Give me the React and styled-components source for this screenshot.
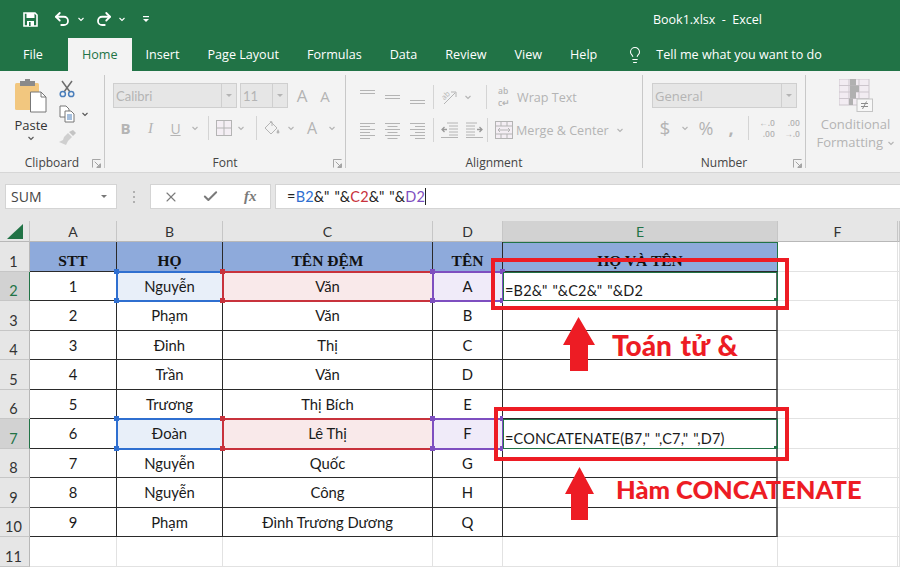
import React from 'react'
import styled, { createGlobalStyle } from 'styled-components'
import { Undo2, Redo2, Lightbulb, X, Check } from 'lucide-react'

const GREEN = '#217346'
const MUTED = '#b4b4b4'
const UI_FONT = '"Open Sans", "Noto Sans", sans-serif'
const CELL_FONT = 'Lato, "Noto Sans", sans-serif'

const Global = createGlobalStyle`
  html, body { margin: 0; padding: 0; }
  body { width: 900px; height: 567px; overflow: hidden; background: #fff; font-family: ${UI_FONT}; }
`

const Root = styled.div`
  width: 900px;
  height: 567px;
  overflow: hidden;
  display: flex;
  flex-direction: column;
`

/* title bar */
const TitleBar = styled.div`
  height: 38px;
  background: ${GREEN};
  color: #fff;
  display: flex;
  align-items: center;
  padding: 0 0 0 23px;
  box-sizing: border-box;
  flex: none;
`
const QuickSlot = styled.span`
  width: ${p => p.$w}px;
  margin-left: ${p => p.$ml || 0}px;
  display: flex;
  align-items: center;
  justify-content: center;
  flex: none;
`
const TitleText = styled.span`
  margin-left: 503px;
  font-size: 12.5px;
  white-space: pre;
`

/* tabs */
const TabRow = styled.div`
  height: 33px;
  background: ${GREEN};
  display: flex;
  padding-left: 9px;
  flex: none;
`
const Tab = styled.div`
  padding: 0 14px;
  margin-left: ${p => p.$ml || 0}px;
  font-size: 12.6px;
  line-height: 33px;
  color: ${p => (p.$active ? GREEN : '#fff')};
  background: ${p => (p.$active ? '#f3f3f3' : 'transparent')};
  white-space: nowrap;
`
const TellMe = styled.div`
  display: flex;
  align-items: center;
  gap: 12px;
  margin-left: 15px;
  color: #fff;
  font-size: 12.6px;
`

/* ribbon */
const Ribbon = styled.div`
  height: 102px;
  background: #f3f3f3;
  border-bottom: 1px solid #d6d6d6;
  box-sizing: border-box;
  display: flex;
  flex: none;
`
const Group = styled.div`
  width: ${p => p.$w}px;
  flex: none;
  display: flex;
  flex-direction: column;
  position: relative;
  margin: 4px 0 4px;
  border-right: ${p => (p.$last ? 'none' : '1px solid #c8c8c8')};
  box-sizing: border-box;
`
const GroupBody = styled.div`
  flex: 1;
  display: flex;
  min-height: 0;
  padding-left: ${p => p.$pl || 0}px;
`
const GroupLabel = styled.div`
  height: 18px;
  line-height: 18px;
  margin-bottom: -4px;
  text-align: center;
  font-size: 12px;
  color: #444;
  flex: none;
`
const Launcher = styled.svg`
  position: absolute;
  right: 3px;
  bottom: 0;
  width: 9px;
  height: 9px;
`
const Stack = styled.div`
  display: flex;
  flex-direction: column;
  gap: ${p => p.$gap || 0}px;
  padding-top: ${p => p.$pt || 0}px;
`
const ToolRow = styled.div`
  height: ${p => p.$h || 24}px;
  display: flex;
  align-items: center;
`
const Slot = styled.span`
  width: ${p => p.$w}px;
  height: 100%;
  display: flex;
  align-items: center;
  justify-content: center;
  flex: none;
  color: ${MUTED};
  font-family: ${p => (p.$serif ? '"Liberation Serif", serif' : UI_FONT)};
  font-size: ${p => p.$size || 14}px;
  font-weight: ${p => (p.$bold ? 700 : 400)};
  font-style: ${p => (p.$italic ? 'italic' : 'normal')};
  text-decoration: ${p => (p.$under ? 'underline' : 'none')};
`
const Divider = styled.span`
  width: 1px;
  height: 24px;
  background: #d4d4d4;
  margin: 0 ${p => p.$mx || 0}px;
  flex: none;
`
const SelectBox = styled.div`
  width: ${p => p.$w}px;
  height: 25px;
  background: #e6e6e6;
  border: 1px solid #cfcfcf;
  box-sizing: border-box;
  display: flex;
  align-items: center;
  color: ${MUTED};
  font-family: ${p => (p.$calibri ? CELL_FONT : UI_FONT)};
  font-size: 13px;
  padding-left: 2px;
  margin-right: ${p => p.$mr || 0}px;
  flex: none;
`
const SelectText = styled.span`
  flex: 1;
`
const SelectArrow = styled.span`
  width: 14px;
  height: 100%;
  border-left: 1px solid #cfcfcf;
  display: flex;
  align-items: center;
  justify-content: center;
`
const Triangle = styled.span`
  width: 0;
  height: 0;
  border-left: 3px solid transparent;
  border-right: 3px solid transparent;
  border-top: 3px solid ${p => p.$color || MUTED};
`
const MutedLabel = styled.span`
  color: ${MUTED};
  font-size: 12.6px;
  margin-left: 3px;
  white-space: nowrap;
`
const PasteColumn = styled.div`
  width: 48px;
  margin-left: 7px;
  padding-top: 4px;
  display: flex;
  flex-direction: column;
  align-items: center;
  flex: none;
`
const PasteLabel = styled.span`
  font-size: 13px;
  color: #333;
  line-height: 17px;
  margin-top: 4px;
`
const ClipTools = styled.div`
  display: flex;
  flex-direction: column;
  align-items: flex-start;
  padding: 5px 0 0 4px;
  gap: 7px;
`
const CondColumn = styled.div`
  flex: 1;
  display: flex;
  flex-direction: column;
  align-items: center;
  padding: 4px 0 0 5px;
`
const CondLabel = styled.div`
  margin-top: 3px;
  text-align: center;
  color: ${MUTED};
  font-size: 13px;
  line-height: 18px;
  white-space: nowrap;
`

/* formula bar */
const FormulaRow = styled.div`
  height: 48px;
  background: #e6e6e6;
  display: flex;
  align-items: flex-start;
  padding: 11px 0 0 5px;
  box-sizing: border-box;
  flex: none;
`
const NameBox = styled.div`
  width: 112px;
  height: 25px;
  background: #fff;
  border: 1px solid #d4d4d4;
  box-sizing: border-box;
  display: flex;
  align-items: center;
  justify-content: space-between;
  padding: 0 9px 0 5px;
  font-size: 14px;
  color: #444;
`
const Grip = styled.span`
  width: 33px;
  height: 25px;
  display: flex;
  align-items: center;
  justify-content: center;
`
const GripDots = styled.span`
  width: 2px;
  height: 12px;
  background: repeating-linear-gradient(to bottom, #b0b0b0 0 2px, transparent 2px 5px);
`
const FxBox = styled.div`
  width: 121px;
  height: 25px;
  background: #fff;
  border: 1px solid #d4d4d4;
  box-sizing: border-box;
  display: flex;
  align-items: center;
  color: #7a7a7a;
  margin-right: 4px;
`
const FxSlot = styled.span`
  width: 40px;
  display: flex;
  justify-content: center;
  font-family: "Liberation Serif", serif;
  font-style: italic;
  font-weight: 700;
  font-size: 15px;
`
const FormulaInput = styled.div`
  flex: 1;
  height: 25px;
  background: #fff;
  border: 1px solid #d4d4d4;
  border-right: none;
  box-sizing: border-box;
  font-family: ${CELL_FONT};
  font-size: 14.5px;
  word-spacing: 1px;
  letter-spacing: 0.2px;
  line-height: 24px;
  padding-left: 11px;
  color: #222;
  white-space: pre;
`
const Ref = styled.span`
  color: ${p => p.$color};
`
const Caret = styled.span`
  display: inline-block;
  width: 1px;
  height: 17px;
  background: #222;
  vertical-align: -3px;
`

/* sheet */
const Sheet = styled.div`
  position: relative;
  flex: 1;
  display: grid;
  grid-template-columns: 30px 87px 106px 210px 70px 275px 120px 2px;
  grid-template-rows: 21px repeat(11, 29.5px);
  background: #fff;
  overflow: hidden;
`
const ColHead = styled.div`
  background: ${p => (p.$sel ? '#d2d2d2' : '#e6e6e6')};
  border-right: 1px solid #c6c6c6;
  border-bottom: 1px solid #b8b8b8;
  box-sizing: border-box;
  display: flex;
  align-items: center;
  justify-content: center;
  font-family: ${CELL_FONT};
  font-size: 14px;
  color: ${p => (p.$sel ? GREEN : '#333')};
`
const CornerMark = styled.svg`
  width: 16px;
  height: 15px;
`
const RowHead = styled.div`
  background: ${p => (p.$sel ? '#d2d2d2' : '#e6e6e6')};
  border-bottom: 1px solid #c6c6c6;
  border-right: ${p => (p.$sel ? `1px solid ${GREEN}` : '1px solid #b8b8b8')};
  box-sizing: border-box;
  display: flex;
  align-items: flex-end;
  justify-content: center;
  font-family: ${CELL_FONT};
  font-size: 14.5px;
  line-height: 18px;
  padding-right: 2px;
  color: ${p => (p.$sel ? GREEN : '#333')};
`
const Cell = styled.div`
  position: relative;
  box-sizing: border-box;
  display: flex;
  align-items: center;
  justify-content: center;
  white-space: nowrap;
  font-family: ${CELL_FONT};
  font-size: 14.8px;
  color: #1a1a1a;
  background: ${p => p.$bg || '#fff'};
  border-right: ${p => (p.$open ? '1px solid #e2e2e2' : '1px solid #2a2a2a')};
  border-bottom: ${p => (p.$open ? '1px solid #e2e2e2' : '1px solid #2a2a2a')};
`
const HeaderCell = styled(Cell)`
  background: #8eaadb;
  font-family: "Liberation Serif", serif;
  font-weight: 700;
  font-size: 15.5px;
  align-items: flex-end;
  padding-bottom: 1px;
  color: #111;
  border-top: ${p => (p.$sel ? `1px solid ${GREEN}` : 'none')};
  border-right: ${p => (p.$sel ? `1px solid ${GREEN}` : '1px solid #2a2a2a')};
`
const RangeCell = styled(Cell)`
  background: ${p => p.$tint};
  outline: 2px solid ${p => p.$color};
  outline-offset: -1px;
  z-index: 1;
`
const Handle = styled.i`
  position: absolute;
  width: 5px;
  height: 5px;
  background: ${p => p.$color};
  left: ${p => (p.$h === 'l' ? '-3px' : 'auto')};
  right: ${p => (p.$h === 'r' ? '-3px' : 'auto')};
  top: ${p => (p.$v === 't' ? '-3px' : 'auto')};
  bottom: ${p => (p.$v === 'b' ? '-3px' : 'auto')};
`
const FormulaCell = styled(Cell)`
  justify-content: flex-start;
  align-items: flex-end;
  padding: 0 0 1px 2px;
  font-size: 14.5px;
  word-spacing: 1px;
  letter-spacing: 0.2px;
  line-height: 16px;
  border-right: 2px solid #666;
  outline: ${p => (p.$editing ? `1px solid ${GREEN}` : 'none')};
  outline-offset: -1px;
  z-index: 2;
`
const GreenDot = styled.i`
  position: absolute;
  right: -2px;
  bottom: -2px;
  width: 4px;
  height: 4px;
  background: ${GREEN};
`

/* annotations drawn over the sheet */
const RedBox = styled.div`
  position: absolute;
  left: ${p => p.$x}px;
  top: ${p => p.$y}px;
  width: ${p => p.$w}px;
  height: ${p => p.$h}px;
  border: 4px solid #ed1c24;
  box-sizing: border-box;
  z-index: 5;
`
const Arrow = styled.svg`
  position: absolute;
  left: ${p => p.$x}px;
  top: ${p => p.$y}px;
  z-index: 5;
`
const Callout = styled.div`
  position: absolute;
  left: ${p => p.$x}px;
  top: ${p => p.$y}px;
  font-family: ${CELL_FONT};
  font-weight: 900;
  font-size: ${p => p.$size}px;
  word-spacing: ${p => p.$ws || 0}px;
  line-height: 30px;
  color: #ed1c24;
  white-space: nowrap;
  z-index: 5;
`

/* small drawings */
const Chev = ({ color = MUTED, size = 8 }) => (
  <svg width={size} height={size} viewBox="0 0 8 8">
    <path d="M1.5 3 4 5.5 6.5 3" fill="none" stroke={color} strokeWidth="1.1" />
  </svg>
)
const SaveIcon = () => (
  <svg width="15" height="15" viewBox="0 0 15 15">
    <path d="M1 1h11l2 2v11H1z" fill="none" stroke="#fff" strokeWidth="1.6" />
    <rect x="3.5" y="1" width="8" height="5" fill="#fff" />
    <path d="M4 9h7v5H4z" fill="#fff" />
    <rect x="6" y="10" width="1.6" height="4" fill={GREEN} />
  </svg>
)
const CustomizeIcon = () => (
  <svg width="8" height="8" viewBox="0 0 8 8">
    <rect x="1" y="1" width="6" height="1.2" fill="#fff" />
    <path d="M1 4h6L4 7z" fill="#fff" />
  </svg>
)
const PasteIcon = () => (
  <svg width="32" height="34" viewBox="0 0 32 34">
    <rect x="0" y="4" width="24" height="27" rx="1.5" fill="#f2c77f" />
    <rect x="5" y="2" width="15" height="5" fill="#8a8a8a" />
    <rect x="10" y="0" width="5" height="3" fill="#8a8a8a" />
    <path d="M15.5 13H26l5 5v15H15.5z" fill="#fff" stroke="#777" />
    <path d="M26 13v5h5" fill="none" stroke="#777" />
  </svg>
)
const ScissorsIcon = () => (
  <svg width="16" height="18" viewBox="0 0 16 18">
    <path d="M3 1l8 11M13 1 5 12" stroke="#6d6d6d" strokeWidth="1.5" fill="none" />
    <circle cx="3.8" cy="14" r="2.6" fill="none" stroke="#4a7ebb" strokeWidth="1.5" />
    <circle cx="12.2" cy="14" r="2.6" fill="none" stroke="#4a7ebb" strokeWidth="1.5" />
  </svg>
)
const CopyIcon = () => (
  <svg width="16" height="18" viewBox="0 0 16 18">
    <path d="M1 1h6l3 3v8H1z" fill="#fff" stroke="#777" />
    <path d="M6 6h6l3 3v8H6z" fill="#fff" stroke="#777" />
    <path d="M8 10h5M8 12h5M8 14h5" stroke="#4a7ebb" />
  </svg>
)
const BrushIcon = () => (
  <svg width="17" height="15" viewBox="0 0 17 15">
    <path d="M10 2l4-2 3 3-3 3z" fill="#c4c4c4" />
    <path d="M9 3l4 4-4 4-2 4-7-3 4-2 1-3z" fill="#cfcfcf" />
  </svg>
)
const BordersIcon = () => (
  <svg width="16" height="16" viewBox="0 0 16 16">
    <rect x="0.5" y="0.5" width="15" height="15" fill="#f4eef4" stroke={MUTED} />
    <path d="M8 0v16M0 8h16" stroke={MUTED} />
  </svg>
)
const FillIcon = () => (
  <svg width="16" height="15" viewBox="0 0 16 15">
    <path d="M7 1 13 7 7 13 1 7z" fill="none" stroke={MUTED} />
    <path d="M6 1c0-1 2-1 2 0v4" fill="none" stroke={MUTED} />
    <path d="M14 8l1.5 3a1.5 1.5 0 1 1-3 0z" fill={MUTED} />
  </svg>
)
const Lines = ({ rows, align = 'left', gray = MUTED }) => (
  <svg width="15" height="17" viewBox="0 0 15 17">
    {rows.map(([y, w], i) => {
      const x = align === 'left' ? 0 : align === 'right' ? 15 - w : (15 - w) / 2
      return <rect key={i} x={x} y={y} width={w} height="1" fill={gray} />
    })}
  </svg>
)
const alignRows = [[1, 15], [4, 10], [7, 15], [10, 10], [13, 15], [16, 10]]
const OrientIcon = () => (
  <svg width="20" height="20" viewBox="0 0 20 20">
    <text x="8" y="11" textAnchor="middle" fontFamily="Open Sans" fontSize="7.5" fill={MUTED} transform="rotate(-45 8 9)">ab</text>
    <path d="M6 17 17 6M13 5h5v5" stroke={MUTED} fill="none" />
  </svg>
)
const IndentIcon = ({ flip }) => (
  <svg width="17" height="16" viewBox="0 0 17 16" transform={flip ? 'scale(-1 1)' : undefined}>
    <path d="M6 1h11M8 4h9M8 7h9M8 10h9M8 13h9M0 15.5h17" stroke={MUTED} />
    <path d="M6 7.5H1M3.5 5 1 7.5 3.5 10" fill="none" stroke="#9a9a9a" strokeWidth="1.3" />
  </svg>
)
const MergeIcon = () => (
  <svg width="18" height="18" viewBox="0 0 18 18">
    <rect x="0.5" y="0.5" width="17" height="17" fill="#f4eef4" stroke={MUTED} />
    <path d="M0 5h18M0 13h18M6 0v5M12 0v5M6 13v5M12 13v5" stroke={MUTED} />
    <path d="M3 9h12M5 7 3 9l2 2M13 7l2 2-2 2" stroke={MUTED} fill="none" />
  </svg>
)
const WrapGlyph = styled.span`
  color: ${MUTED};
  font-size: 8.5px;
  line-height: 11.6px;
  font-weight: 600;
  width: 14px;
`
const DecimalGlyph = styled.span`
  color: ${MUTED};
  font-size: 8.5px;
  line-height: 11px;
  text-align: right;
  font-weight: 600;
  white-space: pre;
`
const CondIcon = () => (
  <svg width="34" height="33" viewBox="0 0 34 33">
    <rect x="0" y="0" width="30" height="26" fill="#f2ecf2" stroke="#cdc6cd" />
    <path d="M10 0v26M20 0v26M0 6.5h30M0 13h30M0 19.5h30" stroke="#cdc6cd" />
    <rect x="11" y="0" width="6" height="6.5" fill="#b0b0b0" />
    <rect x="11" y="6.5" width="9" height="6.5" fill="#b0b0b0" />
    <rect x="11" y="13" width="6" height="6.5" fill="#b0b0b0" />
    <rect x="10" y="19.5" width="4" height="6.5" fill="#b0b0b0" />
    <rect x="18" y="20" width="15.5" height="12.5" fill="#f7f7f7" stroke="#c4c4c4" />
    <path d="M22 24.5h7M22 27.5h7M27.5 22.5l-4 7.5" stroke="#8c8c8c" />
  </svg>
)
const LaunchMark = () => (
  <Launcher viewBox="0 0 10 10">
    <path d="M0.5 9.5V0.5h9M9.5 5v4.5H5M3 3l5.5 5.5M8.5 5.5v3h-3" fill="none" stroke="#999" />
  </Launcher>
)

const COLS = ['A', 'B', 'C', 'D', 'E', 'F']
const ROWS = [
  ['1', 'Nguyễn', 'Văn', 'A'],
  ['2', 'Phạm', 'Văn', 'B'],
  ['3', 'Đinh', 'Thị', 'C'],
  ['4', 'Trần', 'Văn', 'D'],
  ['5', 'Trương', 'Thị Bích', 'E'],
  ['6', 'Đoàn', 'Lê Thị', 'F'],
  ['7', 'Nguyễn', 'Quốc', 'G'],
  ['8', 'Nguyễn', 'Công', 'H'],
  ['9', 'Phạm', 'Đình Trương Dương', 'Q'],
]
const HEADERS = ['STT', 'HỌ', 'TÊN ĐỆM', 'TÊN']
const RANGES = [
  { color: '#2f6fd0', tint: '#e8eff9' },
  { color: '#c8323c', tint: '#f9e9ea' },
  { color: '#7e4fc0', tint: '#f0ebf9' },
]
const FORMULAS = {
  2: '=B2&" "&C2&" "&D2',
  7: '=CONCATENATE(B7," ",C7," ",D7)',
}

const Corners = ({ color }) => (
  <>
    <Handle $color={color} $h="l" $v="t" />
    <Handle $color={color} $h="r" $v="t" />
    <Handle $color={color} $h="l" $v="b" />
    <Handle $color={color} $h="r" $v="b" />
  </>
)

const renderRow = (row, i) => {
  const num = i + 2
  const active = Boolean(FORMULAS[num])
  return (
    <React.Fragment key={num}>
      <RowHead $sel={active}>{num}</RowHead>
      <Cell>{row[0]}</Cell>
      {[1, 2, 3].map(c =>
        active ? (
          <RangeCell key={c} $color={RANGES[c - 1].color} $tint={RANGES[c - 1].tint}>
            {row[c]}
            <Corners color={RANGES[c - 1].color} />
          </RangeCell>
        ) : (
          <Cell key={c}>{row[c]}</Cell>
        )
      )}
      <FormulaCell $editing={active}>
        {FORMULAS[num]}
        {active && <GreenDot />}
      </FormulaCell>
      <Cell $open />
      <Cell $open />
    </React.Fragment>
  )
}

export default function App() {
  return (
    <Root>
      <Global />
      <TitleBar>
        <QuickSlot $w={15}><SaveIcon /></QuickSlot>
        <QuickSlot $w={18} $ml={15}><Undo2 size={18} strokeWidth={2.4} /></QuickSlot>
        <QuickSlot $w={14} $ml={3}><Chev color="#fff" /></QuickSlot>
        <QuickSlot $w={18} $ml={7}><Redo2 size={18} strokeWidth={2.4} /></QuickSlot>
        <QuickSlot $w={14} $ml={2}><Chev color="#fff" /></QuickSlot>
        <QuickSlot $w={8} $ml={13}><CustomizeIcon /></QuickSlot>
        <TitleText>Book1.xlsx  -  Excel</TitleText>
      </TitleBar>

      <TabRow>
        <Tab>File</Tab>
        <Tab $active $ml={11}>Home</Tab>
        <Tab>Insert</Tab>
        <Tab>Page Layout</Tab>
        <Tab>Formulas</Tab>
        <Tab>Data</Tab>
        <Tab>Review</Tab>
        <Tab>View</Tab>
        <Tab>Help</Tab>
        <TellMe>
          <Lightbulb size={18} strokeWidth={1.4} />
          Tell me what you want to do
        </TellMe>
      </TabRow>

      <Ribbon>
        <Group $w={105}>
          <GroupBody>
            <PasteColumn>
              <PasteIcon />
              <PasteLabel>Paste</PasteLabel>
              <Chev color="#555" />
            </PasteColumn>
            <ClipTools>
              <ScissorsIcon />
              <ToolRow $h={18}>
                <CopyIcon />
                <Slot $w={20}><Chev color="#555" /></Slot>
              </ToolRow>
              <BrushIcon />
            </ClipTools>
          </GroupBody>
          <GroupLabel>Clipboard</GroupLabel>
          <LaunchMark />
        </Group>

        <Group $w={241}>
          <GroupBody $pl={8}>
            <Stack $pt={8} $gap={8}>
              <ToolRow $h={25}>
                <SelectBox $w={124} $mr={3} $calibri>
                  <SelectText>Calibri</SelectText>
                  <SelectArrow><Triangle /></SelectArrow>
                </SelectBox>
                <SelectBox $w={48} $calibri>
                  <SelectText>11</SelectText>
                  <SelectArrow><Triangle /></SelectArrow>
                </SelectBox>
                <Slot $w={24} $size={17} style={{ marginLeft: 2 }}>A</Slot>
                <Slot $w={22} $size={15}>A</Slot>
              </ToolRow>
              <ToolRow $h={24}>
                <Slot $w={25} $size={15} $bold>B</Slot>
                <Slot $w={25} $size={15} $italic $serif>I</Slot>
                <Slot $w={25} $size={14} $under>U</Slot>
                <Slot $w={14}><Chev /></Slot>
                <Divider $mx={6} />
                <Slot $w={17}><BordersIcon /></Slot>
                <Slot $w={18}><Chev /></Slot>
                <Divider $mx={6} />
                <Slot $w={18}><FillIcon /></Slot>
                <Slot $w={20}><Chev /></Slot>
                <Slot $w={22} $size={16}>A</Slot>
                <Slot $w={18}><Chev /></Slot>
              </ToolRow>
            </Stack>
          </GroupBody>
          <GroupLabel>Font</GroupLabel>
          <LaunchMark />
        </Group>

        <Group $w={297}>
          <GroupBody $pl={9}>
            <Stack $pt={10} $gap={9}>
              <ToolRow>
                <Slot $w={25}><Lines rows={[[1, 15], [4, 15]]} /></Slot>
                <Slot $w={25}><Lines rows={[[6, 15], [9, 15]]} /></Slot>
                <Slot $w={25}><Lines rows={[[11, 15], [14, 15]]} /></Slot>
                <Divider $mx={3} />
                <Slot $w={22}><OrientIcon /></Slot>
                <Slot $w={18}><Chev /></Slot>
                <Slot $w={9} />
                <Divider />
                <Slot $w={9} />
                <Slot $w={18}>
                  <WrapGlyph>ab<br />c↵</WrapGlyph>
                </Slot>
                <MutedLabel>Wrap Text</MutedLabel>
              </ToolRow>
              <ToolRow>
                <Slot $w={25}><Lines rows={alignRows} /></Slot>
                <Slot $w={25}><Lines rows={alignRows} align="center" /></Slot>
                <Slot $w={25}><Lines rows={alignRows} align="right" /></Slot>
                <Divider $mx={3} />
                <Slot $w={25}><IndentIcon /></Slot>
                <Slot $w={25}><IndentIcon flip /></Slot>
                <Divider />
                <Slot $w={7} />
                <Slot $w={18}><MergeIcon /></Slot>
                <MutedLabel>Merge &amp; Center</MutedLabel>
                <Slot $w={22}><Chev /></Slot>
              </ToolRow>
            </Stack>
          </GroupBody>
          <GroupLabel>Alignment</GroupLabel>
        </Group>

        <Group $w={163}>
          <GroupBody $pl={9}>
            <Stack $pt={8} $gap={8}>
              <ToolRow $h={25}>
                <SelectBox $w={145}>
                  <SelectText>General</SelectText>
                  <SelectArrow><Triangle /></SelectArrow>
                </SelectBox>
              </ToolRow>
              <ToolRow $h={24}>
                <Slot $w={26} $size={19}>$</Slot>
                <Slot $w={14}><Chev /></Slot>
                <Slot $w={28} $size={18}>%</Slot>
                <Slot $w={22} $size={18} $bold>,</Slot>
                <Divider $mx={6} />
                <Slot $w={24}><DecimalGlyph>←.0<br />.00</DecimalGlyph></Slot>
                <Slot $w={26}><DecimalGlyph>.00<br />→.0</DecimalGlyph></Slot>
              </ToolRow>
            </Stack>
          </GroupBody>
          <GroupLabel>Number</GroupLabel>
          <LaunchMark />
        </Group>

        <Group $w={94} $last>
          <GroupBody>
            <CondColumn>
              <CondIcon />
              <CondLabel>Conditional<br />Formatting <Chev /></CondLabel>
            </CondColumn>
          </GroupBody>
        </Group>
      </Ribbon>

      <FormulaRow>
        <NameBox>SUM<Triangle $color="#777" /></NameBox>
        <Grip><GripDots /></Grip>
        <FxBox>
          <FxSlot><X size={16} strokeWidth={1.6} /></FxSlot>
          <FxSlot><Check size={17} strokeWidth={2.8} /></FxSlot>
          <FxSlot>fx</FxSlot>
        </FxBox>
        <FormulaInput>
          =<Ref $color="#2f6fd0">B2</Ref>&amp;" "&amp;<Ref $color="#c8323c">C2</Ref>&amp;" "&amp;<Ref $color="#7e4fc0">D2</Ref><Caret />
        </FormulaInput>
      </FormulaRow>

      <Sheet>
        <ColHead>
          <CornerMark viewBox="0 0 16 15"><path d="M16 0v15H0z" fill={GREEN} /></CornerMark>
        </ColHead>
        {COLS.map(c => <ColHead key={c} $sel={c === 'E'}>{c}</ColHead>)}
        <ColHead />

        <RowHead>1</RowHead>
        {HEADERS.map(h => <HeaderCell key={h}>{h}</HeaderCell>)}
        <HeaderCell $sel>HỌ VÀ TÊN</HeaderCell>
        <Cell $open />
        <Cell $open />

        {ROWS.map(renderRow)}

        <RowHead>11</RowHead>
        {[0, 1, 2, 3, 4, 5, 6].map(i => <Cell key={i} $open />)}

        <RedBox $x={491} $y={37} $w={298} $h={52} />
        <RedBox $x={494} $y={186} $w={295} $h={54} />
        <Arrow $x={563} $y={96} width="32" height="54" viewBox="0 0 32 54">
          <path d="M15.5 0 32 28H25V54H7V28H0z" fill="#ed1c24" />
        </Arrow>
        <Arrow $x={565} $y={246} width="29" height="53" viewBox="0 0 29 53">
          <path d="M14.5 0 29 27H23V53H6V27H0z" fill="#ed1c24" />
        </Arrow>
        <Callout $x={612} $y={109} $size={28} $ws={2}>Toán tử &amp;</Callout>
        <Callout $x={616} $y={253} $size={25.5}>Hàm CONCATENATE</Callout>
      </Sheet>
    </Root>
  )
}
